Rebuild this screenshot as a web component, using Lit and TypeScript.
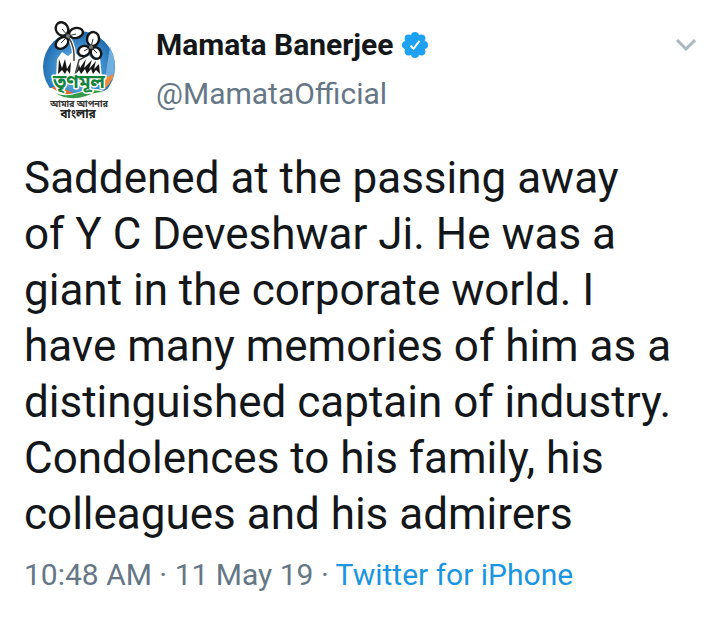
import { LitElement, html, css, svg } from "lit";
import { customElement } from "lit/decorators.js";

const tweet = {
  name: "Mamata Banerjee",
  handle: "@MamataOfficial",
  lines: [
    "Saddened at the passing away",
    "of Y C Deveshwar Ji. He was a",
    "giant in the corporate world. I",
    "have many memories of him as a",
    "distinguished captain of industry.",
    "Condolences to his family, his",
    "colleagues and his admirers",
  ],
  time: "10:48 AM",
  date: "11 May 19",
  source: "Twitter for iPhone",
};

@customElement("profile-logo")
class ProfileLogo extends LitElement {
  static styles = css`
    :host { display: block; width: 80px; height: 104px; }
    svg { display: block; width: 100%; height: 100%; }
    .bn { font-family: "Noto Sans Bengali", "Noto Sans", sans-serif; font-weight: 700; text-anchor: middle; }
    .title { font-size: 19px; fill: #16833c; stroke: #fff; stroke-width: 3px; paint-order: stroke; stroke-linejoin: round; }
    .small { font-size: 9px; fill: #333; }
    .large { font-size: 12px; fill: #222; }
  `;

  private petal(x: number, y: number, rx: number, ry: number, angle: number) {
    return svg`<ellipse cx=${x} cy=${y} rx=${rx} ry=${ry} transform="rotate(${angle} ${x} ${y})"/>`;
  }

  render() {
    return html`
      <svg viewBox="39 18 80 104" role="img" aria-label="Trinamool logo">
        <defs>
          <radialGradient id="sky" cx="50%" cy="55%" r="55%">
            <stop offset="0" stop-color="#8fc4e8" />
            <stop offset="0.6" stop-color="#3f8fce" />
            <stop offset="1" stop-color="#1c69ad" />
          </radialGradient>
        </defs>
        <circle cx="79" cy="67" r="36" fill="url(#sky)" />
        <path d="M42 88H53Q65 97 79 92Q92 86 104 91L117 84V104H42Z" fill="#fff" />
        <path d="M110 47Q118 62 113 78L104 88L106 72Z" fill="#6faedd" />
        <path d="M105 78L114 74Q111 84 104 89Z" fill="#ef8a3c" />
        <path d="M56 78L57 59L62 52L68 56L74 51L80 58L87 54L94 60L100 57L102 78Z" fill="#fff" />
        <path d="M69 38Q75 47 74 61M91 48Q89 56 79 60L75 75" fill="none" stroke="#fff" stroke-width="4" />
        <path d="M69 38Q75 47 74 61M91 48Q89 56 79 60L75 75" fill="none" stroke="#444" stroke-width="1.5" />
        <path d="M58 74L59 59L62 68L65 59L67 69L71 62L70 74L67 70L65 74L62 70ZM76 74L79 64L80 68L86 59L84 68L92 60L89 69L96 61L94 69L99 64L100 74L96 70L93 74L91 69L87 74L85 69L81 74L79 70Z" fill="#151515" />
        <g fill="#fff" stroke="#161616" stroke-width="2.4">
          ${this.petal(62, 29, 6, 7, -34)}
          ${this.petal(76, 33, 7, 5, -12)}
          ${this.petal(62, 43, 7, 5, -38)}
          ${this.petal(93, 39, 6, 7, 8)}
          ${this.petal(84, 51, 6, 5, -16)}
          ${this.petal(96, 53, 5, 6, -28)}
        </g>
        <path d="M62 29L68 36L76 34M68 36L61 43M93 39L91 47L84 51M91 47L97 53" fill="none" stroke="#333" stroke-width="1" />
        <circle cx="68" cy="36" r="2" fill="#777" />
        <circle cx="91" cy="47" r="2" fill="#777" />
        <path d="M51 87Q61 86 73 93Q63 97 51 87Z" fill="#e86c27" />
        <path d="M54 92Q64 98 78 93Q92 88 104 92Q95 92 86 96Q68 102 54 92Z" fill="#349b49" />
        <text class="bn title" x="79" y="88">তৃণমূল</text>
        <text class="bn small" x="79" y="107">আমার আপনার</text>
        <text class="bn large" x="78" y="118">বাংলার</text>
      </svg>
    `;
  }
}

@customElement("app-root")
class AppRoot extends LitElement {
  static styles = css`
    :host {
      display: block;
      background: #fff;
      color: #14171a;
      font-family: Roboto, "Liberation Sans", sans-serif;
    }
    article { padding: 18px 20px 24px 24px; }
    header { display: flex; align-items: flex-start; }
    .avatar { margin: 0 37px 0 15px; }
    .who { flex: 1; min-width: 0; padding-top: 2px; }
    .name { display: flex; align-items: center; gap: 9px; margin: 0; font-size: 30px; line-height: 50px; font-weight: 700; }
    .badge { width: 26px; height: 26px; }
    .handle { display: block; width: max-content; color: #657786; font-size: 30px; line-height: 48px; text-decoration: none; }
    .menu { display: flex; margin-top: 15px; padding: 4px 0; border: 0; background: none; }
    .menu svg { width: 22px; height: 16px; }
    .text { margin: 28px 0 0; font-size: 44px; line-height: 56px; white-space: pre-line; }
    footer { margin-top: 16px; color: #657786; font-size: 30px; line-height: 34px; }
    footer a { color: #1b95e0; text-decoration: none; }
  `;

  render() {
    return html`
      <article>
        <header>
          <profile-logo class="avatar"></profile-logo>
          <div class="who">
            <h1 class="name">
              ${tweet.name}
              <svg class="badge" viewBox="0 0 26 26" role="img" aria-label="Verified account">
                <g fill="#1da1f2">
                  <circle cx="13" cy="13" r="10" />
                  <circle cx="13" cy="4" r="4" /><circle cx="19.4" cy="6.6" r="4" />
                  <circle cx="22" cy="13" r="4" /><circle cx="19.4" cy="19.4" r="4" />
                  <circle cx="13" cy="22" r="4" /><circle cx="6.6" cy="19.4" r="4" />
                  <circle cx="4" cy="13" r="4" /><circle cx="6.6" cy="6.6" r="4" />
                </g>
                <path d="M8.5 13.5L11.5 16.8L17.5 8.8" fill="none" stroke="#fff" stroke-width="2" />
              </svg>
            </h1>
            <a class="handle" href="#profile">${tweet.handle}</a>
          </div>
          <button class="menu" aria-label="More options">
            <svg viewBox="0 0 22 16"><path d="M2 3L11 12L20 3" fill="none" stroke="#aab8c2" stroke-width="3" /></svg>
          </button>
        </header>
        <p class="text">${tweet.lines.join("\n")}</p>
        <footer>
          <time>${tweet.time} · ${tweet.date}</time> · <a href="#source">${tweet.source}</a>
        </footer>
      </article>
    `;
  }
}
